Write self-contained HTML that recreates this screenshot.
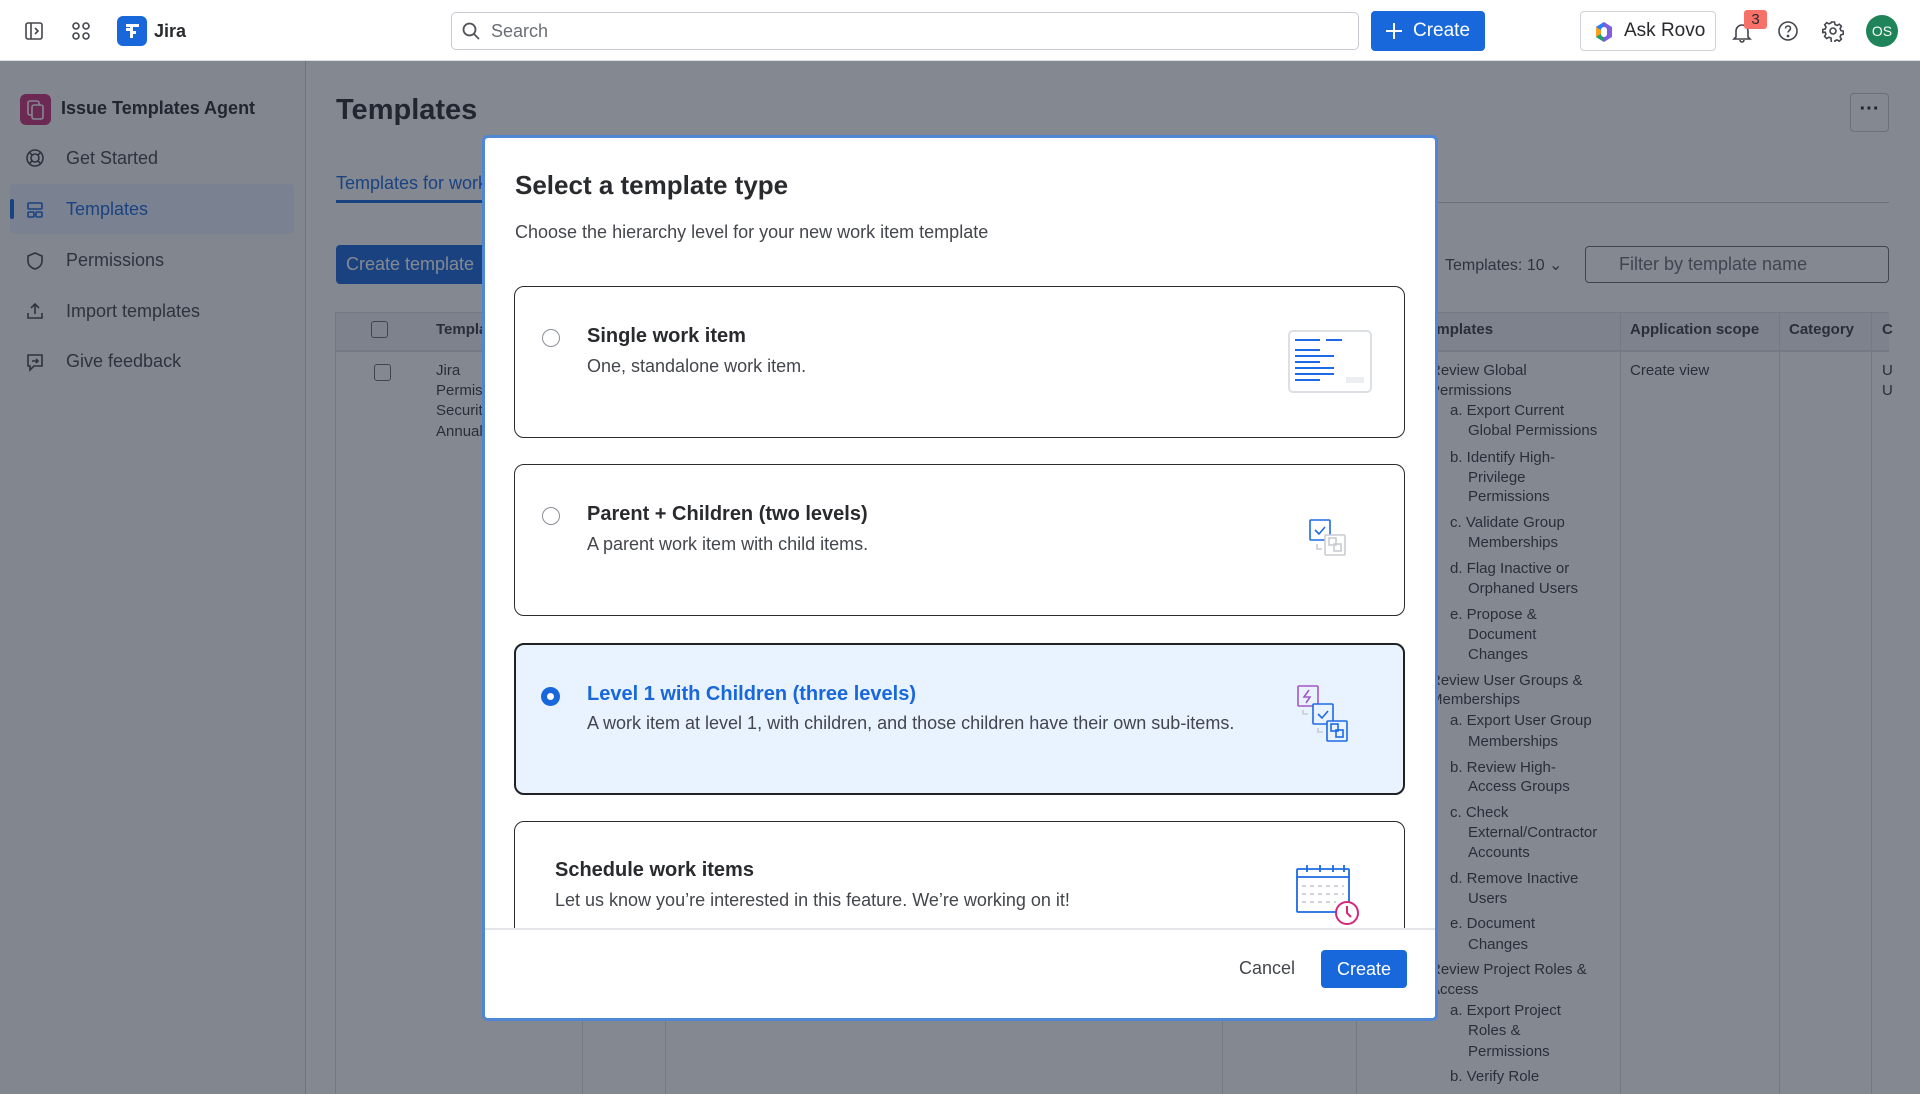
<!DOCTYPE html>
<html><head><meta charset="utf-8"><style>
*{box-sizing:border-box;margin:0;padding:0}
body{width:1920px;height:1094px;overflow:hidden;font-family:"Liberation Sans",sans-serif;color:#292a2e;background:#fff;position:relative}
.abs{position:absolute}
.hdr{left:0;top:0;width:1920px;height:61px;background:#fff;border-bottom:1px solid #dcdfe4;z-index:5}
.side{left:0;top:61px;width:306px;height:1033px;background:#fafafa;border-right:1px solid #d0d3d8}
.nav{position:absolute;left:66px;font-size:18px;color:#44464d}
.ov{left:0;top:61px;width:1920px;height:1033px;background:rgba(28,35,52,0.54);z-index:3}
.tl{position:absolute;font-size:15px;color:#3a3c42;white-space:nowrap;line-height:20px}
.modal{left:482px;top:135px;width:956px;height:886px;border:3px solid #4f86d6;border-radius:6px;background:#fff;z-index:4;overflow:hidden}
.card{position:absolute;left:29px;width:891px;border:1.5px solid #2a2c30;border-radius:10px;background:#fff}
.card .t{position:absolute;left:72px;font-size:20px;font-weight:bold;color:#292a2e}
.card .d{position:absolute;left:72px;font-size:18px;color:#44464d}
.radio{position:absolute;left:27px;width:18px;height:18px;border:1.5px solid #8c8f97;border-radius:50%}
</style></head><body>

<div class="abs hdr">
  <svg class="abs" style="left:24px;top:21px" width="20" height="20" viewBox="0 0 20 20" fill="none" stroke="#44464d" stroke-width="1.6"><rect x="2" y="2" width="16" height="16" rx="2"/><line x1="7" y1="2" x2="7" y2="18"/><path d="M11 7l3 3-3 3"/></svg>
  <svg class="abs" style="left:71px;top:21px" width="20" height="20" viewBox="0 0 20 20" fill="none" stroke="#44464d" stroke-width="1.6"><rect x="2" y="2" width="6" height="6" rx="3"/><rect x="12" y="2" width="6" height="6" rx="3"/><rect x="2" y="12" width="6" height="6" rx="3"/><rect x="12" y="12" width="6" height="6" rx="3"/></svg>
  <div class="abs" style="left:117px;top:16px;width:30px;height:30px;border-radius:6px;background:#1868db"><svg width="30" height="30" viewBox="0 0 30 30" fill="#fff"><path d="M9 8h13v3h-6v4h3v3h-3v4h-3v-7h-4v-3h4V11H9z"/></svg></div>
  <div class="abs" style="left:154px;top:21px;font-size:18px;font-weight:bold;color:#292a2e">Jira</div>
  <div class="abs" style="left:451px;top:12px;width:908px;height:38px;border:1px solid #c8cbd1;border-radius:5px"></div>
  <svg class="abs" style="left:461px;top:21px" width="20" height="20" viewBox="0 0 20 20" fill="none" stroke="#505258" stroke-width="1.8"><circle cx="8.5" cy="8.5" r="6"/><line x1="13" y1="13" x2="18" y2="18"/></svg>
  <div class="abs" style="left:491px;top:21px;font-size:18px;color:#6b6e76">Search</div>
  <div class="abs" style="left:1371px;top:11px;width:114px;height:40px;background:#1868db;border-radius:4px;color:#fff;font-size:19px;line-height:40px;padding-left:42px">Create</div>
  <svg class="abs" style="left:1385px;top:22px" width="18" height="18" viewBox="0 0 18 18" stroke="#fff" stroke-width="2"><line x1="9" y1="1" x2="9" y2="17"/><line x1="1" y1="9" x2="17" y2="9"/></svg>
  <div class="abs" style="left:1580px;top:11px;width:136px;height:40px;border:1px solid #d0d3d8;border-radius:4px;font-size:19px;line-height:38px;padding-left:43px;color:#292a2e">Ask Rovo</div>
  <svg class="abs" style="left:1594px;top:21px" width="20" height="22" viewBox="0 0 20 22"><path d="M10 1l8 5v10l-8 5-8-5V6z" fill="#7f5fe0"/><path d="M2 6l8-5v10z" fill="#2d7ff9"/><path d="M2 16V6l8 5z" fill="#f6a21c"/><path d="M10 21l-8-5 8-5z" fill="#22a06b"/><rect x="7" y="6" width="6" height="10" rx="3" fill="#fff"/></svg>
  <svg class="abs" style="left:1731px;top:21px" width="22" height="22" viewBox="0 0 22 22" fill="none" stroke="#44464d" stroke-width="1.6"><path d="M5 16V10a6 6 0 0112 0v6l2 2H3z"/><path d="M9 19a2 2 0 004 0"/></svg>
  <div class="abs" style="left:1744px;top:10px;width:23px;height:19px;background:#f87168;border-radius:3px;font-size:15px;text-align:center;line-height:19px;color:#292a2e">3</div>
  <svg class="abs" style="left:1777px;top:20px" width="22" height="22" viewBox="0 0 22 22" fill="none" stroke="#44464d" stroke-width="1.6"><circle cx="11" cy="11" r="9"/><path d="M8.5 8.5a2.5 2.5 0 115 0c0 2-2.5 2-2.5 4"/><circle cx="11" cy="16" r=".6" fill="#44464d"/></svg>
  <svg class="abs" style="left:1822px;top:20px" width="22" height="22" viewBox="0 0 22 22" fill="none" stroke="#44464d" stroke-width="1.6"><circle cx="11" cy="11" r="3"/><path d="M9.5 2h3l.5 2.5 2 1 2.3-1.3 2.1 2.1-1.3 2.3.8 2 2.4.6v3l-2.4.6-.8 2 1.3 2.3-2.1 2.1-2.3-1.3-2 .8-.5 2.4h-3L9 18l-2-.8-2.3 1.3-2.1-2.1 1.3-2.3-.8-2L.8 12.5v-3L3.2 9 4 7 2.7 4.7l2.1-2.1L7 3.9l2-1z"/></svg>
  <div class="abs" style="left:1866px;top:15px;width:32px;height:32px;border-radius:50%;background:#1f845a;color:#fff;font-size:14px;text-align:center;line-height:32px">OS</div>
</div>

<div class="abs side">
  <div class="abs" style="left:20px;top:33px;width:31px;height:31px;border-radius:6px;background:#c9317a"></div>
  <svg class="abs" style="left:20px;top:33px" width="31" height="31" viewBox="0 0 31 31" fill="none" stroke="#fff" stroke-width="1.6"><rect x="8" y="7" width="11" height="14" rx="2"/><rect x="12" y="11" width="11" height="14" rx="2" fill="#c9317a"/></svg>
  <div class="nav" style="left:61px;top:37px;font-weight:bold;color:#292a2e">Issue Templates Agent</div>
  <div class="abs" style="left:10px;top:123px;width:284px;height:50px;background:#e9f2ff;border-radius:4px"></div>
  <div class="abs" style="left:10px;top:138px;width:4px;height:20px;background:#1868db;border-radius:2px"></div>
  <svg class="abs" style="left:25px;top:87px" width="20" height="20" viewBox="0 0 20 20" fill="none" stroke="#44464d" stroke-width="1.6"><circle cx="10" cy="10" r="8"/><circle cx="10" cy="10" r="4"/><path d="M4.3 4.3l2.9 2.9M15.7 4.3l-2.9 2.9M4.3 15.7l2.9-2.9M15.7 15.7l-2.9-2.9"/></svg>
  <div class="nav" style="top:87px">Get Started</div>
  <svg class="abs" style="left:25px;top:139px" width="20" height="20" viewBox="0 0 20 20" fill="none" stroke="#1868db" stroke-width="1.6"><rect x="3" y="3" width="14" height="6" rx="1"/><rect x="3" y="12" width="6" height="5" rx="1"/><rect x="11" y="12" width="6" height="5" rx="1"/></svg>
  <div class="nav" style="top:138px;color:#1868db">Templates</div>
  <svg class="abs" style="left:25px;top:190px" width="20" height="20" viewBox="0 0 20 20" fill="none" stroke="#44464d" stroke-width="1.6"><path d="M10 2l7 3v5c0 4-3 7-7 8-4-1-7-4-7-8V5z"/></svg>
  <div class="nav" style="top:189px">Permissions</div>
  <svg class="abs" style="left:25px;top:240px" width="20" height="20" viewBox="0 0 20 20" fill="none" stroke="#44464d" stroke-width="1.6"><path d="M10 13V3M6 7l4-4 4 4M3 12v5h14v-5"/></svg>
  <div class="nav" style="top:240px">Import templates</div>
  <svg class="abs" style="left:25px;top:291px" width="20" height="20" viewBox="0 0 20 20" fill="none" stroke="#44464d" stroke-width="1.6"><path d="M3 3h14v11H9l-4 4v-4H3z"/><path d="M7 9h6M11 7l2 2-2 2"/></svg>
  <div class="nav" style="top:290px">Give feedback</div>
</div>

<!-- main -->
<div class="abs" style="left:336px;top:94px;font-size:29px;font-weight:bold;color:#292a2e">Templates</div>
<div class="abs" style="left:1850px;top:93px;width:39px;height:39px;border:1px solid #c8cbd1;border-radius:4px;text-align:center;font-size:20px;line-height:30px;font-weight:bold;color:#292a2e">···</div>
<div class="abs" style="left:336px;top:173px;font-size:18px;color:#1868db">Templates for work</div>
<div class="abs" style="left:336px;top:202px;width:1553px;height:1px;background:#c8cbd1"></div>
<div class="abs" style="left:336px;top:200px;width:160px;height:3px;background:#1868db"></div>
<div class="abs" style="left:336px;top:245px;width:170px;height:39px;background:#1868db;border-radius:4px;color:#fff;font-size:18px;line-height:39px;padding-left:10px">Create template</div>
<div class="abs" style="left:1445px;top:255px;font-size:16px;color:#44464d">Templates: 10 &#8964;</div>
<div class="abs" style="left:1585px;top:246px;width:304px;height:37px;border:1.5px solid #6b6e76;border-radius:4px;font-size:18px;line-height:34px;padding-left:33px;color:#6b6e76">Filter by template name</div>
<div class="abs" style="left:336px;top:312px;width:1553px;height:40px;background:#f1f2f4;border-top:1px solid #dcdfe4;border-bottom:2px solid #dcdfe4"></div>
<div class="abs" style="left:335px;top:312px;width:1px;height:782px;background:#dcdfe4"></div>
<div class="abs" style="left:582px;top:352px;width:1px;height:742px;background:#dcdfe4"></div>
<div class="abs" style="left:665px;top:352px;width:1px;height:742px;background:#dcdfe4"></div>
<div class="abs" style="left:1222px;top:352px;width:1px;height:742px;background:#dcdfe4"></div>
<div class="abs" style="left:1356px;top:352px;width:1px;height:742px;background:#dcdfe4"></div>
<div class="abs" style="left:1620px;top:312px;width:1px;height:782px;background:#dcdfe4"></div>
<div class="abs" style="left:1779px;top:312px;width:1px;height:782px;background:#dcdfe4"></div>
<div class="abs" style="left:1871px;top:312px;width:1px;height:782px;background:#dcdfe4"></div>
<div class="abs" style="left:371px;top:321px;width:17px;height:17px;border:1.5px solid #6b6e76;border-radius:3px"></div>
<div class="abs" style="left:374px;top:364px;width:17px;height:17px;border:1.5px solid #6b6e76;border-radius:3px"></div>
<div class="tl" style="left:436px;top:320px;font-weight:bold">Templates</div>
<div class="tl" style="left:436px;top:361px">Jira</div>
<div class="tl" style="left:436px;top:381px">Permissions</div>
<div class="tl" style="left:436px;top:401px">Security</div>
<div class="tl" style="left:436px;top:422px">Annual</div>
<div class="tl" style="left:1420px;top:320px;font-weight:bold">Templates</div>
<div class="tl" style="left:1630px;top:320px;font-weight:bold">Application scope</div>
<div class="tl" style="left:1789px;top:320px;font-weight:bold">Category</div>
<div class="tl" style="left:1882px;top:320px;font-weight:bold">C</div>
<div class="tl" style="left:1630px;top:361px">Create view</div>
<div class="tl" style="left:1882px;top:361px">U</div>
<div class="tl" style="left:1882px;top:381px">U</div>
<div class="abs" style="left:1430px;top:0;width:190px;height:1094px">
<div class="tl" style="left:0;top:361px">Review Global</div>
<div class="tl" style="left:0;top:381px">Permissions</div>
<div class="tl" style="left:20px;top:401px">a. Export Current</div>
<div class="tl" style="left:38px;top:421px">Global Permissions</div>
<div class="tl" style="left:20px;top:448px">b. Identify High-</div>
<div class="tl" style="left:38px;top:468px">Privilege</div>
<div class="tl" style="left:38px;top:487px">Permissions</div>
<div class="tl" style="left:20px;top:513px">c. Validate Group</div>
<div class="tl" style="left:38px;top:533px">Memberships</div>
<div class="tl" style="left:20px;top:559px">d. Flag Inactive or</div>
<div class="tl" style="left:38px;top:579px">Orphaned Users</div>
<div class="tl" style="left:20px;top:605px">e. Propose &amp;</div>
<div class="tl" style="left:38px;top:625px">Document</div>
<div class="tl" style="left:38px;top:645px">Changes</div>
<div class="tl" style="left:0;top:671px">Review User Groups &amp;</div>
<div class="tl" style="left:0;top:690px">Memberships</div>
<div class="tl" style="left:20px;top:711px">a. Export User Group</div>
<div class="tl" style="left:38px;top:732px">Memberships</div>
<div class="tl" style="left:20px;top:758px">b. Review High-</div>
<div class="tl" style="left:38px;top:777px">Access Groups</div>
<div class="tl" style="left:20px;top:803px">c. Check</div>
<div class="tl" style="left:38px;top:823px">External/Contractor</div>
<div class="tl" style="left:38px;top:843px">Accounts</div>
<div class="tl" style="left:20px;top:869px">d. Remove Inactive</div>
<div class="tl" style="left:38px;top:889px">Users</div>
<div class="tl" style="left:20px;top:914px">e. Document</div>
<div class="tl" style="left:38px;top:935px">Changes</div>
<div class="tl" style="left:0;top:960px">Review Project Roles &amp;</div>
<div class="tl" style="left:0;top:980px">Access</div>
<div class="tl" style="left:20px;top:1001px">a. Export Project</div>
<div class="tl" style="left:38px;top:1021px">Roles &amp;</div>
<div class="tl" style="left:38px;top:1042px">Permissions</div>
<div class="tl" style="left:20px;top:1067px">b. Verify Role</div>
</div>

<div class="abs ov"></div>

<div class="abs modal">
  <div class="abs" style="left:30px;top:32px;font-size:26px;font-weight:bold;color:#292a2e">Select a template type</div>
  <div class="abs" style="left:30px;top:84px;font-size:18px;color:#44464d">Choose the hierarchy level for your new work item template</div>

  <div class="card" style="top:148px;height:152px">
    <div class="radio" style="top:42px"></div>
    <div class="t" style="top:38px">Single work item</div>
    <div class="d" style="top:69px">One, standalone work item.</div>
    <svg class="abs" style="left:773px;top:43px" width="84" height="63" viewBox="0 0 84 63" fill="none"><rect x="1" y="1" width="82" height="61" rx="4" stroke="#dcdfe4" stroke-width="2"/><g stroke="#1d6ae5" stroke-width="2"><line x1="7" y1="10" x2="32" y2="10"/><line x1="38" y1="10" x2="54" y2="10"/><line x1="7" y1="20" x2="32" y2="20"/><line x1="7" y1="26" x2="46" y2="26"/><line x1="7" y1="32" x2="32" y2="32"/><line x1="7" y1="38" x2="46" y2="38"/><line x1="7" y1="44" x2="46" y2="44"/><line x1="7" y1="50" x2="32" y2="50"/></g><rect x="58" y="47" width="18" height="6" fill="#eceef1"/></svg>
  </div>

  <div class="card" style="top:326px;height:152px">
    <div class="radio" style="top:42px"></div>
    <div class="t" style="top:38px">Parent + Children (two levels)</div>
    <div class="d" style="top:69px">A parent work item with child items.</div>
    <svg class="abs" style="left:794px;top:54px" width="46" height="44" viewBox="0 0 46 44" fill="none" stroke-width="1.6"><rect x="1" y="1" width="20" height="20" rx="1" stroke="#1d6ae5"/><path d="M6 11l4 4 6-7" stroke="#1d6ae5"/><path d="M8 25v5h5" stroke="#c9ccd2"/><rect x="16" y="16" width="20" height="20" rx="1" stroke="#c9ccd2" fill="#fff"/><rect x="20" y="19" width="7" height="7" stroke="#c9ccd2"/><rect x="25" y="25" width="7" height="7" stroke="#c9ccd2"/></svg>
  </div>

  <div class="card" style="top:505px;height:152px;border:2.5px solid #1f2124;background:#e9f2ff">
    <div class="abs" style="left:25px;top:42px;width:19px;height:19px;border-radius:50%;background:#1868db"><div style="margin:6px;width:7px;height:7px;border-radius:50%;background:#fff"></div></div>
    <div class="t" style="top:38px;color:#1868db;left:71px">Level 1 with Children (three levels)</div>
    <div class="d" style="top:68px;left:71px">A work item at level 1, with children, and those children have their own sub-items.</div>
    <svg class="abs" style="left:781px;top:40px" width="66" height="64" viewBox="0 0 66 64" fill="none" stroke-width="1.6"><rect x="1" y="1" width="20" height="20" rx="1" stroke="#9f59c4"/><path d="M12 5l-5 7h6l-4 6" stroke="#9f59c4"/><path d="M6 25v4h5" stroke="#c9ccd2"/><rect x="16" y="19" width="20" height="20" rx="1" stroke="#1d6ae5" fill="#e9f2ff"/><path d="M21 29l4 4 6-7" stroke="#1d6ae5"/><path d="M21 43v4h5" stroke="#c9ccd2"/><rect x="30" y="36" width="20" height="20" rx="1" stroke="#1d6ae5" fill="#e9f2ff"/><rect x="34" y="39" width="7" height="7" stroke="#1d6ae5"/><rect x="39" y="45" width="7" height="7" stroke="#1d6ae5"/></svg>
  </div>

  <div class="card" style="top:683px;height:152px">
    <div class="t" style="top:37px;left:40px">Schedule work items</div>
    <div class="d" style="top:68px;left:40px">Let us know you’re interested in this feature. We’re working on it!</div>
    <svg class="abs" style="left:781px;top:42px" width="66" height="64" viewBox="0 0 66 64" fill="none" stroke-width="1.8"><rect x="1" y="5" width="52" height="43" rx="1" stroke="#1d6ae5"/><line x1="1" y1="13" x2="53" y2="13" stroke="#1d6ae5"/><path d="M11 1v7M24 1v7M37 1v7M48 1v7" stroke="#1d6ae5"/><g stroke="#c9ccd2" stroke-dasharray="4 4"><line x1="6" y1="22" x2="48" y2="22"/><line x1="6" y1="30" x2="48" y2="30"/><line x1="6" y1="38" x2="40" y2="38"/></g><circle cx="51" cy="49" r="11" stroke="#d6267a" fill="#fff" stroke-width="2"/><path d="M51 42v7l4 4" stroke="#d6267a" stroke-width="2"/></svg>
  </div>

  <div class="abs" style="left:0;top:790px;width:950px;height:96px;background:#fff;border-top:2px solid #e3e5e8"></div>
  <div class="abs" style="left:754px;top:820px;font-size:18px;color:#44464d">Cancel</div>
  <div class="abs" style="left:836px;top:812px;width:86px;height:38px;background:#1868db;border-radius:4px;color:#fff;font-size:18px;line-height:38px;text-align:center">Create</div>
</div>
</body></html>
